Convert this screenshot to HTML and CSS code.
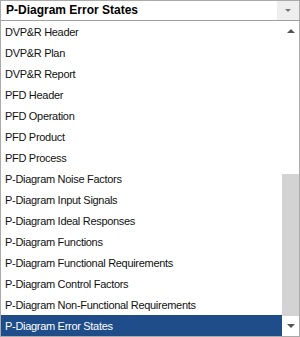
FILE: index.html
```html
<!DOCTYPE html>
<html lang="en">

<head>
    <meta charset="UTF-8">
    <link rel="stylesheet" href="styles.css">
</head>

<body>
    <div class="combo">
        <div class="combo-value">P-Diagram Error States</div>
        <div class="combo-btn"><span class="arrow-down small"></span></div>
    </div>

    <div class="dropdown">
        <ul class="options">
            <li>DVP&amp;R Header</li>
            <li>DVP&amp;R Plan</li>
            <li>DVP&amp;R Report</li>
            <li>PFD Header</li>
            <li>PFD Operation</li>
            <li>PFD Product</li>
            <li>PFD Process</li>
            <li>P-Diagram Noise Factors</li>
            <li>P-Diagram Input Signals</li>
            <li>P-Diagram Ideal Responses</li>
            <li>P-Diagram Functions</li>
            <li>P-Diagram Functional Requirements</li>
            <li>P-Diagram Control Factors</li>
            <li>P-Diagram Non-Functional Requirements</li>
            <li class="selected">P-Diagram Error States</li>
        </ul>
        <div class="scrollbar">
            <div class="sb-btn"><span class="arrow-up"></span></div>
            <div class="sb-track">
                <div class="sb-thumb"></div>
            </div>
            <div class="sb-btn"><span class="arrow-down"></span></div>
        </div>
    </div>
</body>

</html>
```

FILE: styles.css
```css
body {
    margin: 0;
    width: 300px;
    height: 337px;
    overflow: hidden;
    background: #fff;
    font-family: "Liberation Sans", Arial, sans-serif;
    font-size: 11px;
    color: #111;
}

.combo {
    display: flex;
    height: 19px;
    border: 1px solid #aaaaaa;
    border-bottom-color: #a0a0a0;
}

.combo-value {
    flex: 1;
    padding-left: 5px;
    line-height: 19px;
    font-weight: bold;
    font-size: 12px;
    color: #000;
}

.combo-btn {
    width: 22px;
    background: #eeeeee;
    display: flex;
    align-items: center;
    justify-content: center;
}

.dropdown {
    display: flex;
    height: 315px;
    border: 1px solid #aaaaaa;
    border-top: none;
}

.options {
    flex: 1;
    list-style: none;
    margin: 0;
    padding: 0;
}

.options li {
    height: 21px;
    line-height: 22px;
    padding-left: 4px;
    letter-spacing: -0.3px;
    white-space: nowrap;
}

.options li.selected {
    background: #1e4d8a;
    color: #fff;
}

.scrollbar {
    width: 17px;
    display: flex;
    flex-direction: column;
}

.sb-btn {
    height: 20px;
    display: flex;
    align-items: center;
    justify-content: center;
}

.sb-track {
    flex: 1;
    display: flex;
    flex-direction: column;
    justify-content: flex-end;
}

.sb-thumb {
    height: 142px;
    background: #d3d3d3;
}

.arrow-up {
    width: 0;
    height: 0;
    border-left: 4px solid transparent;
    border-right: 4px solid transparent;
    border-bottom: 4px solid #555;
}

.arrow-down {
    width: 0;
    height: 0;
    border-left: 4px solid transparent;
    border-right: 4px solid transparent;
    border-top: 4px solid #555;
}

.arrow-down.small {
    border-left-width: 3px;
    border-right-width: 3px;
    border-top: 3px solid #777;
}
```
